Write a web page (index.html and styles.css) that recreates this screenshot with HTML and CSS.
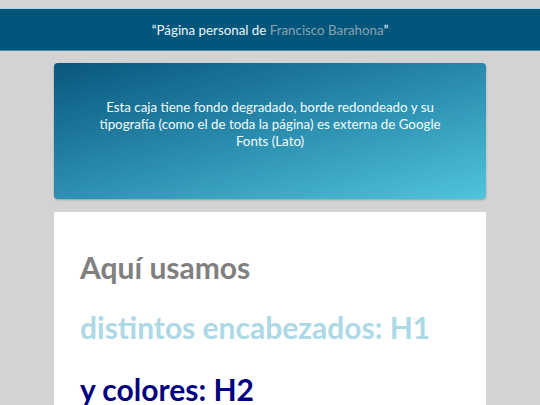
FILE: index.html
```html
<!DOCTYPE html>
<html lang="es">
<head>
<meta charset="utf-8">
<title>Página personal</title>
<link rel="stylesheet" href="styles.css">
</head>
<body>
<header class="topbar">
  <p class="topbar-text">“Página personal de <span class="name">Francisco Barahona</span>”</p>
</header>
<main class="wrap">
  <section class="hero">
    <p>Esta caja tiene fondo degradado, borde redondeado y su tipografía (como el de toda la página) es externa de Google Fonts (Lato)</p>
  </section>
  <section class="card">
    <h1 class="h-gray">Aquí usamos</h1>
    <h1 class="h-light">distintos encabezados: H1</h1>
    <h2 class="h-navy">y colores: H2</h2>
  </section>
</main>
</body>
</html>
```

FILE: styles.css
```css
html, body {
  margin: 0;
  padding: 0;
}
body {
  background: #d3d3d3;
  font-family: Lato, "Liberation Sans", sans-serif;
  padding-top: 8px;
  overflow: hidden;
  height: 405px;
  box-sizing: border-box;
}
.topbar {
  background: #02557b;
  border-top: 1px solid #a9d2e3;
  border-bottom: 1px solid #4a89a6;
  height: 41px;
  display: flex;
  align-items: center;
  justify-content: center;
}
.topbar-text {
  margin: 0;
  color: #eef6fa;
  font-size: 13.33px;
}
.name {
  color: #8aa2b1;
}
.wrap {
  width: 80%;
  margin: 12px auto 0;
}
.hero {
  border-radius: 4px;
  background: linear-gradient(165deg, #09567d 0%, #2a8cae 50%, #4fc5da 100%);
  box-shadow: 0 1px 2px rgba(0,0,0,0.25);
  padding: 36px 40px 49px;
  text-align: center;
  color: #f4fbfd;
  font-size: 13.33px;
  line-height: 17px;
}
.hero p {
  margin: 0;
}
.card {
  background: #ffffff;
  margin-top: 13px;
  padding: 35px 26px 20px;
}
.card h1, .card h2 {
  font-size: 30px;
  font-weight: 700;
  margin: 0;
  line-height: 40px;
}
.h-gray { color: #808080; margin-bottom: 20px !important; }
.h-light { color: #add8e6; margin-bottom: 22px !important; }
.h-navy { color: #000080; }
```
